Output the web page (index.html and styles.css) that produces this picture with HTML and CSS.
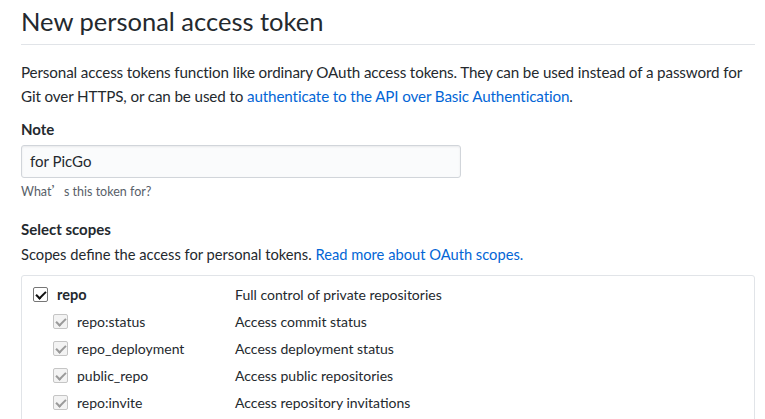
FILE: index.html
```html
<!DOCTYPE html>
<html>
<head>
<meta charset="utf-8">
<link rel="stylesheet" href="styles.css">
</head>
<body>
<div class="page">
  <div class="subhead"><h2 class="subhead-heading">New personal access token</h2></div>
  <p class="intro">Personal access tokens function like ordinary OAuth access tokens. They can be used instead of a password for Git over HTTPS, or can be used to <a href="#">authenticate to the API over Basic Authentication</a>.</p>
  <div class="field">
    <label class="label">Note</label>
    <div class="input">for PicGo</div>
    <p class="note">What<span class="cjk">’</span>s this token for?</p>
  </div>
  <div class="field scopes">
    <label class="label">Select scopes</label>
    <p class="scopes-desc">Scopes define the access for personal tokens. <a href="#">Read more about OAuth scopes.</a></p>
  </div>
  <div class="scope-box">
    <div class="row">
      <div class="name main"><span class="cb checked"></span><b>repo</b></div>
      <div class="desc">Full control of private repositories</div>
    </div>
    <div class="row">
      <div class="name sub"><span class="cb disabled"></span>repo:status</div>
      <div class="desc">Access commit status</div>
    </div>
    <div class="row">
      <div class="name sub"><span class="cb disabled"></span>repo_deployment</div>
      <div class="desc">Access deployment status</div>
    </div>
    <div class="row">
      <div class="name sub"><span class="cb disabled"></span>public_repo</div>
      <div class="desc">Access public repositories</div>
    </div>
    <div class="row">
      <div class="name sub"><span class="cb disabled"></span>repo:invite</div>
      <div class="desc">Access repository invitations</div>
    </div>
  </div>
</div>
</body>
</html>
```
FILE: styles.css
```css
* { box-sizing: border-box; }
html, body { margin: 0; padding: 0; background: #fff; }
body {
  font-family: Lato, "Noto Sans", sans-serif;
  font-size: 15px;
  color: #24292e;
  overflow: hidden;
}
.page { padding: 0 10px 0 21px; }
.subhead {
  border-bottom: 1px solid #e1e4e8;
  padding-top: 4px;
  height: 45px;
}
.subhead-heading {
  margin: 0;
  font-weight: 400;
  font-size: 25.5px;
  line-height: 34px;
}
.intro {
  margin: 15px -6px 0 0;
  line-height: 24px;
  font-size: 15.2px;
  letter-spacing: -0.12px;
}
a { color: #0366d6; text-decoration: none; }
.field { margin-top: 10px; }
.field.scopes { margin-top: 16px; }
.label { display: block; font-weight: 700; line-height: 22px; }
.input {
  margin-top: 5px;
  width: 440px;
  height: 33px;
  border: 1px solid #d1d5da;
  border-radius: 3px;
  background: #fafbfc;
  padding: 0 8px;
  line-height: 31px;
  box-shadow: inset 0 1px 2px rgba(27,31,35,0.075);
}
.note {
  margin: 3px 0 0;
  font-size: 12.5px;
  color: #586069;
  line-height: 20px;
}
.cjk { font-family: "Noto Sans CJK SC", sans-serif; }
.scopes-desc { margin: 3px 0 0; line-height: 22px; font-size: 14.7px; }
.scope-box {
  margin-top: 10px;
  border: 1px solid #e1e4e8;
  border-radius: 3px;
  padding: 5px 0 0 11px;
  height: 160px;
  font-size: 14px;
}
.row { display: flex; height: 27px; align-items: center; }
.name { width: 202px; display: flex; align-items: center; }
.name.sub { padding-left: 20px; }
.main b { font-size: 14.5px; }
.cb {
  width: 15px; height: 15px;
  border: 1px solid #767676;
  border-radius: 2px;
  margin-right: 9px;
  position: relative;
  background: #fff;
}
.cb::after {
  content: "";
  position: absolute;
  left: 4px; top: 1px;
  width: 4px; height: 8px;
  border: solid #111;
  border-width: 0 2px 2px 0;
  transform: rotate(45deg);
}
.cb.disabled { border-color: #c5c5c5; background: #f3f3f3; }
.cb.disabled::after { border-color: #9a9a9a; }
.desc { color: #24292e; }
```
